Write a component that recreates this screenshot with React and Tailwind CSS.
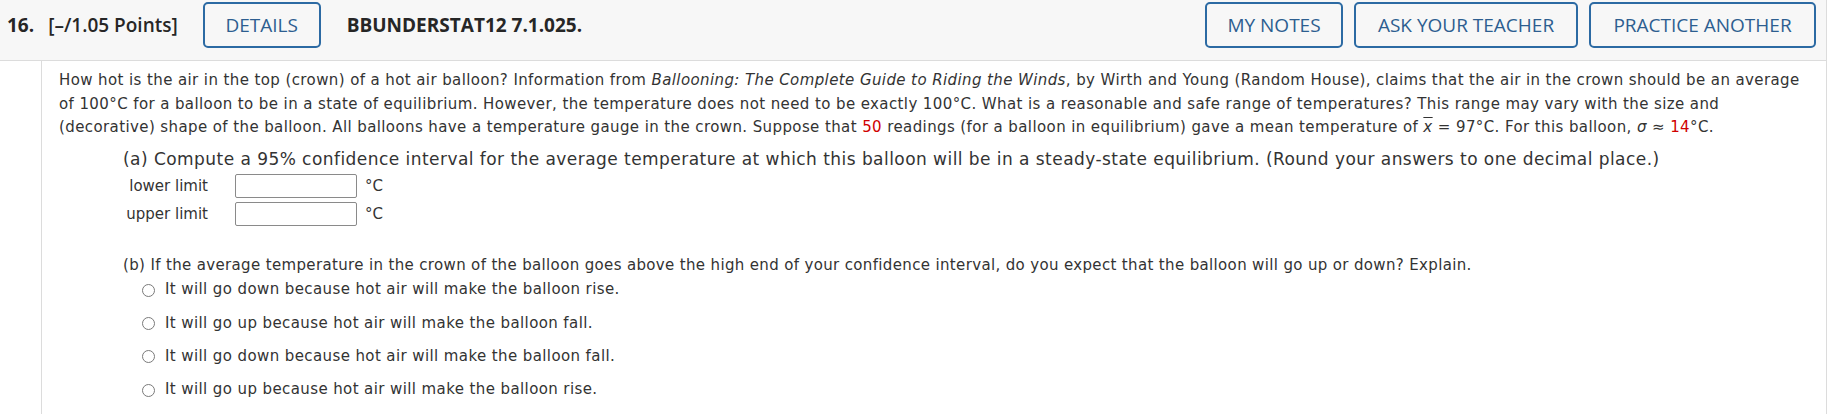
const headerFont = { fontFamily: '"Open Sans", "Noto Sans", sans-serif' };

const HeaderButton = ({ children, width }) => (
  <button
    type="button"
    className={`${width} h-[46px] border-2 border-[#2c6aa3] rounded-[5px] text-[19px] font-medium text-[#2d5e90] uppercase bg-transparent text-center`}
  >
    {children}
  </button>
);

const Radio = ({ label }) => (
  <label className="flex items-center h-[33.3px]">
    <span className="w-[13px] h-[13px] rounded-full border border-[#7a7a7a] bg-white mr-[10px]" />
    <span>{label}</span>
  </label>
);

const LimitRow = ({ label }) => (
  <>
    <span className="text-right leading-[24px] mr-[27px]">{label}</span>
    <input
      type="text"
      className="w-[122px] h-[24px] border border-[#8a8a8a] rounded-[2px] bg-white"
    />
    <span className="leading-[24px] ml-[8px]">°C</span>
  </>
);

export default function App() {
  const options = [
    'It will go down because hot air will make the balloon rise.',
    'It will go up because hot air will make the balloon fall.',
    'It will go down because hot air will make the balloon fall.',
    'It will go up because hot air will make the balloon rise.',
  ];

  return (
    <div className="w-[1827px] min-h-[414px] border-r border-[#dcdcdc] bg-white">
      <div
        className="h-[61px] bg-[#f7f7f7] border-b border-[#dcdcdc] pt-[2px] pl-[7px] pr-[10px]"
        style={headerFont}
      >
        <div className="flex items-center h-[46px] text-[#262626]">
          <span className="text-[19px] font-bold">16.</span>
          <span className="text-[19px] font-semibold ml-[14px]">[–/1.05 Points]</span>
          <div className="ml-[25px]">
            <HeaderButton width="w-[118px]">Details</HeaderButton>
          </div>
          <span className="text-[19px] font-bold ml-[26px]">BBUNDERSTAT12 7.1.025.</span>
          <div className="flex-1" />
          <div className="flex gap-[11px]">
            <HeaderButton width="w-[138px]">My Notes</HeaderButton>
            <HeaderButton width="w-[224px]">Ask Your Teacher</HeaderButton>
            <HeaderButton width="w-[227px]">Practice Another</HeaderButton>
          </div>
        </div>
      </div>

      <div className="flex">
        <div className="w-[42px] min-h-[353px] border-r border-[#dcdcdc]" />
        <div
          className="pl-[17px] pt-[8px] text-[15px] leading-[23.5px] tracking-[0.4px] text-[#333]"
          style={{ fontFamily: '"DejaVu Sans", Verdana, sans-serif' }}
        >
          <p className="whitespace-nowrap">
            How hot is the air in the top (crown) of a hot air balloon? Information from{' '}
            <i>Ballooning: The Complete Guide to Riding the Winds</i>, by Wirth and Young (Random House), claims that the air in the crown should be an average
            <br />
            of 100°C for a balloon to be in a state of equilibrium. However, the temperature does not need to be exactly 100°C. What is a reasonable and safe range of temperatures? This range may vary with the size and
            <br />
            (decorative) shape of the balloon. All balloons have a temperature gauge in the crown. Suppose that{' '}
            <span className="text-[#d00000]">50</span> readings (for a balloon in equilibrium) gave a mean temperature of{' '}
            <span className="italic overline">x</span> = 97°C. For this balloon, <i>σ</i> ≈{' '}
            <span className="text-[#d00000]">14</span>°C.
          </p>

          <div className="ml-[64px] mt-[8px]">
            <p className="text-[17px] tracking-[0.45px] whitespace-nowrap">
              (a) Compute a 95% confidence interval for the average temperature at which this balloon will be in a steady-state equilibrium. (Round your answers to one decimal place.)
            </p>
            <div className="grid grid-cols-[112px_122px_auto] gap-y-[4px] mt-[3px] w-max tracking-normal">
              <LimitRow label="lower limit" />
              <LimitRow label="upper limit" />
            </div>

            <p className="mt-[28px] whitespace-nowrap tracking-[0.35px]">
              (b) If the average temperature in the crown of the balloon goes above the high end of your confidence interval, do you expect that the balloon will go up or down? Explain.
            </p>
            <div className="ml-[19px] mt-[-4px]">
              {options.map((o) => (
                <Radio key={o} label={o} />
              ))}
            </div>
          </div>
        </div>
      </div>
    </div>
  );
}
